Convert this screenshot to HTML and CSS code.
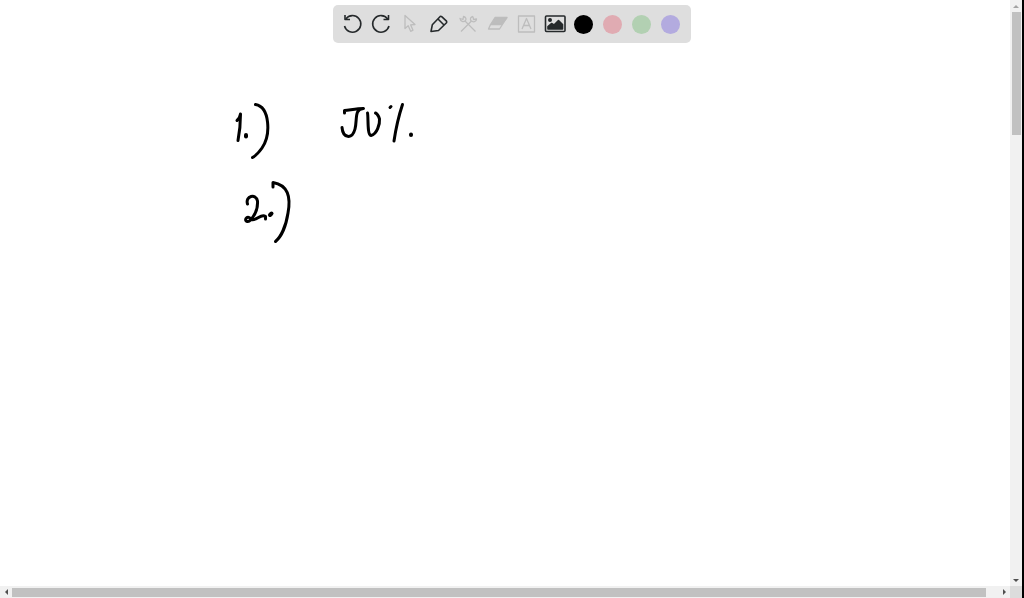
FILE: index.html
```html
<!DOCTYPE html>
<html lang="en">
<head>
<meta charset="utf-8">
<title>Whiteboard</title>
<link rel="stylesheet" href="styles.css">
</head>
<body>
<div class="app">
  <main class="board">
    <svg class="ink" viewBox="0 0 1010 586" role="img" aria-label="Handwriting: 1.) 50%. 2.)">
      <path d="M237 120.500Q240 118 240.500 114Q240.500 128 238 140.500"/>
      <path d="M246 135V136.500" class="dot"/>
      <path d="M255.500 104.500C270 107 271 135 262 148Q257 155 252.500 157.500"/>
      <path d="M247.500 204C245 196 256 193 257.500 201C258 209 255 215 250.500 220C248 223 244.500 221 246 218.500C247.500 216 250 217.500 251.500 219.500C257 221 261 213 265.500 216.500V219"/>
      <path d="M270 215L271.500 213.500" class="dot"/>
      <path d="M273 187V182.500C288 185 291 197 288 213C286 226 281 237 275.500 241.500"/>
      <path d="M344.500 113V110.500C350 110 357 108.500 363.500 108.500C354 109 357.500 119 355 129C352 140 343 138 342 127.500"/>
      <path d="M367.500 113C368.500 117 367 135 371 135.500C377 134 380 124 379.500 119Q378 114 375.500 113"/>
      <path d="M390 107.500L391 106.500"/>
      <path d="M402.500 104.500Q397 121 394 141"/>
      <path d="M411 134.500V135" class="dot"/>
    </svg>
  </main>
  <div class="bar bar-v" role="scrollbar" aria-orientation="vertical" aria-label="Vertical scroll" aria-valuenow="0">
    <span class="arrow up"></span><span class="thumb"></span><span class="arrow down"></span>
  </div>
  <div class="bar bar-h" role="scrollbar" aria-orientation="horizontal" aria-label="Horizontal scroll" aria-valuenow="0">
    <span class="arrow left"></span><span class="thumb"></span><span class="arrow right"></span>
  </div>
  <div class="corner"></div>
</div>
<header class="toolbar" role="toolbar" aria-label="Drawing tools">
  <button class="tool" aria-label="Undo"><svg viewBox="0 0 24 24"><path d="M4.500 14A8.300 8.300 0 1 0 5.800 7"/><path d="M5 3V7.500H10"/></svg></button>
  <button class="tool" aria-label="Redo"><svg viewBox="0 0 24 24"><path d="M20 14A8.300 8.300 0 1 1 18.700 7"/><path d="M19.500 3V7.500H14.500"/></svg></button>
  <button class="tool muted" aria-label="Select"><svg viewBox="0 0 24 24"><path d="M7 3.500V16.500L10.200 13.800L12.700 19.300L15 18.200L12.700 12.900L17 12.500Z"/></svg></button>
  <button class="tool" aria-label="Pen"><svg viewBox="0 0 24 24"><path d="M4 19.500L5.300 12.800L13.200 4.500Q14 4 14.700 4.700L19.500 9.200Q20 10 19.500 10.700L11.500 18.500ZM11 7L17 13"/></svg></button>
  <button class="tool muted" aria-label="Tools"><svg viewBox="0 0 24 24"><path d="M9 9L19.500 19.500M15.500 9L5 19.500"/><path d="M4 6.500L7 7.500L7.500 4.500C10 5 10.500 7 9.500 8.500C7.500 10.500 4.500 9.500 4 6.500ZM17 4.500L17.500 7.500L20.500 7C20.500 10 17 10.500 15 8.800C13.800 7 14.500 4.800 17 4.500"/></svg></button>
  <button class="tool muted" aria-label="Eraser"><svg viewBox="0 0 24 24"><path class="solid" d="M10 5.500H22L16.500 12.500H5.500Z"/><path d="M5.500 12.500L3.500 17H14.500L22 5.500"/></svg></button>
  <button class="tool muted" aria-label="Text"><svg viewBox="0 0 24 24"><path d="M4.500 4H20.500V20H4.500Z"/><path d="M8 17L12.500 6.500L17 17M9.700 13.500H15.300"/></svg></button>
  <button class="tool" aria-label="Image"><svg viewBox="0 0 24 24"><rect x="2.500" y="4" width="19.500" height="15.500" rx="1"/><path class="solid" d="M5 17V14.500L8.500 11.500L11 13L15.500 8.500L19.500 12.500V17Z"/><circle class="solid" cx="7" cy="8" r="1.200"/></svg></button>
  <button class="tool" aria-label="Black"><span class="swatch black"></span></button>
  <button class="tool" aria-label="Red"><span class="swatch red"></span></button>
  <button class="tool" aria-label="Green"><span class="swatch green"></span></button>
  <button class="tool" aria-label="Purple"><span class="swatch purple"></span></button>
</header>
</body>
</html>
```
FILE: styles.css
```css
* { box-sizing: border-box; }
body { margin: 0; background: #fff; font-family: "Liberation Sans", Arial, sans-serif; }
.app {
  display: grid;
  grid-template-columns: minmax(0, 1fr) 12px;
  grid-template-rows: minmax(0, 1fr) 12px;
  height: 100vh;
  border-right: 2px solid #000;
}
.board { overflow: hidden; }
.ink {
  display: block;
  width: 100%;
  height: 100%;
  fill: none;
  stroke: #000;
  stroke-width: 3;
  stroke-linecap: round;
  stroke-linejoin: round;
}
.dot { stroke-width: 4; }
.toolbar {
  position: absolute;
  top: 5px;
  left: 50%;
  transform: translateX(-50%);
  display: flex;
  padding: 0 6px 0 4px;
  border-radius: 5px;
  background: #dedede;
}
.tool {
  display: grid;
  place-items: center;
  width: 29px;
  height: 38px;
  padding: 0;
  border: 0;
  background: none;
  color: #25292b;
}
.tool svg {
  width: 24px;
  height: 24px;
  fill: none;
  stroke: currentColor;
  stroke-width: 1.6;
  stroke-linejoin: round;
}
.tool .solid { fill: currentColor; }
.tool.muted { color: #bdbdbd; }
.tool.muted svg { stroke-width: 1.3; }
.swatch { width: 19px; height: 19px; border-radius: 50%; }
.black { background: #000; }
.red { background: #e0abb2; }
.green { background: #b2d0b2; }
.purple { background: #b3abdf; }
.bar { display: flex; align-items: center; background: #f1f1f1; }
.bar-v { flex-direction: column; }
.thumb { background: #c1c1c1; }
.bar-v .thumb { width: 9px; height: 21%; }
.bar-h .thumb { width: 96.4%; height: 9px; }
.arrow { display: grid; place-items: center; flex: none; width: 12px; height: 12px; }
.arrow::before { content: ""; border: 3px solid transparent; }
.up::before { border-top: 0; border-bottom-color: #a3a3a3; }
.down::before { border-bottom: 0; border-top-color: #505050; }
.left::before { border-left: 0; border-right-color: #505050; }
.right::before { border-right: 0; border-left-color: #505050; }
.down { margin-top: auto; }
.right { margin-left: auto; }
.corner { background: #dcdcdc; }
```
